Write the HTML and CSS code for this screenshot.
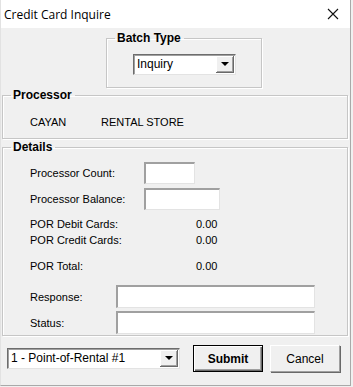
FILE: index.html
```html
<!DOCTYPE html>
<html lang="en">
<head>
    <meta charset="UTF-8">
    <title>Credit Card Inquire</title>
    <link rel="stylesheet" href="styles.css">
</head>
<body>
    <div class="window">
        <div class="titlebar">
            <span class="title">Credit Card Inquire</span>
            <svg class="close" width="12" height="12" viewBox="0 0 12 12">
                <path d="M1 1 L11 11 M11 1 L1 11" stroke="#111" stroke-width="1.1" fill="none"/>
            </svg>
        </div>

        <div class="client">
            <fieldset class="group batch">
                <legend>Batch Type</legend>
                <div class="group-body">
                    <div class="combo batch-combo">
                        <span class="combo-text">Inquiry</span>
                        <span class="combo-btn"><span class="arrow"></span></span>
                    </div>
                </div>
            </fieldset>

            <fieldset class="group processor">
                <legend>Processor</legend>
                <div class="group-body proc-row">
                    <span class="proc-name">CAYAN</span>
                    <span>RENTAL STORE</span>
                </div>
            </fieldset>

            <fieldset class="group details">
                <legend>Details</legend>
                <div class="group-body">
                    <div class="row row-count">
                        <span class="label lbl-wide">Processor Count:</span>
                        <span class="textbox box-count"></span>
                    </div>
                    <div class="row row-balance">
                        <span class="label lbl-wide">Processor Balance:</span>
                        <span class="textbox box-balance"></span>
                    </div>
                    <div class="line line-debit">
                        <span class="label lbl-value">POR Debit Cards:</span>
                        <span>0.00</span>
                    </div>
                    <div class="line line-credit">
                        <span class="label lbl-value">POR Credit Cards:</span>
                        <span>0.00</span>
                    </div>
                    <div class="line line-total">
                        <span class="label lbl-value">POR Total:</span>
                        <span>0.00</span>
                    </div>
                    <div class="row row-response">
                        <span class="label lbl-short">Response:</span>
                        <span class="textbox box-long"></span>
                    </div>
                    <div class="row row-status">
                        <span class="label lbl-short">Status:</span>
                        <span class="textbox box-long"></span>
                    </div>
                </div>
            </fieldset>

            <div class="footer">
                <div class="combo store-combo">
                    <span class="combo-text">1 - Point-of-Rental #1</span>
                    <span class="combo-btn"><span class="arrow"></span></span>
                </div>
                <button class="btn btn-default">Submit</button>
                <button class="btn">Cancel</button>
            </div>
        </div>
    </div>
</body>
</html>
```

FILE: styles.css
```css
body {
    margin: 0;
    padding: 0;
    font-family: 'Liberation Sans', Arial, sans-serif;
    font-size: 11px;
    color: #000;
    background: #f0f0f0;
}

.window {
    width: 351px;
    height: 386px;
    border-right: 1px solid #a9a9a9;
    border-bottom: 1px solid #a9a9a9;
    border-left: 1px solid #e2e2e2;
    box-sizing: border-box;
    background: #f0f0f0;
    overflow: hidden;
}

.titlebar {
    height: 28px;
    background: #fff;
    display: flex;
    align-items: center;
    justify-content: space-between;
    padding: 0 11px 0 3px;
}

.title {
    font-family: 'Open Sans', sans-serif;
    font-size: 12px;
    color: #000;
}

.client {
    padding: 3px 2px 0 1px;
}

/* group boxes */
.group {
    margin: 0;
    padding: 0;
    border: 1px solid #c6c6c6;
    box-shadow: inset 1px 1px 0 #fff, 1px 1px 0 #fff;
    min-width: 0;
    box-sizing: border-box;
}

.group legend {
    font-weight: bold;
    font-size: 12px;
    line-height: 14px;
    padding: 0 3px 0 2px;
    margin-left: 8px;
}

.batch {
    width: 156px;
    margin-left: 104px;
}

.batch .group-body {
    padding: 9px 0 12px 26px;
}

.processor {
    width: 346px;
}

.proc-row {
    line-height: 14px;
    display: flex;
    padding: 13px 0 9px 27px;
}

.proc-name {
    width: 71px;
}

.details {
    width: 346px;
    margin-top: 1px;
}

.details .group-body {
    padding: 8px 0 1px 27px;
}

/* combo boxes */
.combo {
    display: flex;
    align-items: stretch;
    height: 21px;
    box-sizing: border-box;
    background: #fff;
    border-top: 1px solid #6d6d6d;
    border-left: 1px solid #6d6d6d;
    border-right: 1px solid #e3e3e3;
    border-bottom: 1px solid #e3e3e3;
    box-shadow: inset 1px 1px 0 #a0a0a0;
}

.combo-text {
    flex: 1;
    padding-left: 3px;
    font-size: 12px;
    line-height: 19px;
}

.combo-btn {
    width: 17px;
    margin: 1px 1px 1px 0;
    background: #f0f0f0;
    border-right: 1px solid #696969;
    border-bottom: 1px solid #696969;
    box-shadow: inset 1px 1px 0 #fff, inset -1px -1px 0 #a0a0a0;
    display: flex;
    align-items: center;
    justify-content: center;
}

.arrow {
    width: 0;
    height: 0;
    border-left: 4px solid transparent;
    border-right: 4px solid transparent;
    border-top: 4px solid #000;
}

.batch-combo {
    width: 103px;
}

/* detail rows */
.row {
    display: flex;
    align-items: center;
}

.line {
    display: flex;
    line-height: 14px;
}

.label {
    flex: none;
}

.lbl-wide {
    width: 114px;
}

.lbl-value {
    width: 166px;
}

.lbl-short {
    width: 86px;
}

.textbox {
    display: block;
    height: 22px;
    box-sizing: border-box;
    background: #fff;
    border-top: 2px solid #a0a0a0;
    border-left: 2px solid #a0a0a0;
    border-right: 1px solid #e3e3e3;
    border-bottom: 1px solid #e3e3e3;
}

.box-count {
    width: 51px;
}

.box-balance {
    width: 76px;
}

.box-long {
    width: 199px;
    height: 23px;
}

.row-balance {
    margin-top: 4px;
}

.line-debit {
    margin-top: 7px;
}

.line-credit {
    margin-top: 2px;
}

.line-total {
    margin-top: 12px;
}

.row-response {
    margin-top: 12px;
}

.row-status {
    margin-top: 3px;
}

/* footer */
.footer {
    display: flex;
    align-items: center;
    margin-top: 9px;
    padding-left: 5px;
}

.store-combo {
    width: 173px;
    margin-right: 13px;
}

.btn {
    width: 70px;
    height: 27px;
    margin-right: 7px;
    font-family: 'Liberation Sans', Arial, sans-serif;
    font-size: 12px;
    color: #000;
    background: #f0f0f0;
    border: 1px solid #a0a0a0;
    border-top-color: #fff;
    border-left-color: #fff;
    box-shadow: 1px 1px 0 #696969;
    padding: 0;
}

.btn-default {
    font-weight: bold;
    border: 1px solid #000;
    box-shadow: inset 1px 1px 0 #fff, inset -1px -1px 0 #696969, inset -2px -2px 0 #a0a0a0;
}
```
